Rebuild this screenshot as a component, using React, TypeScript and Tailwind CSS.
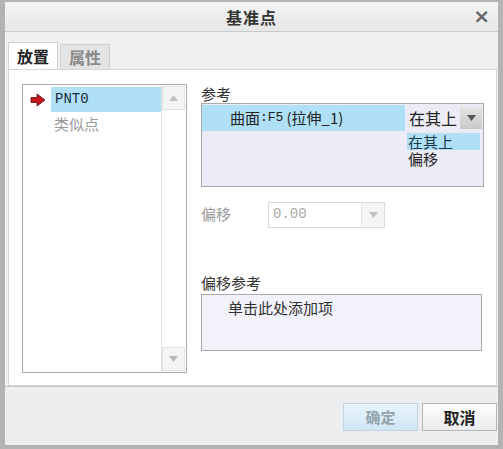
import React from 'react';

const cjk = "font-['Noto_Sans_CJK_SC','Noto_Sans',sans-serif]";

function ArrowIcon() {
  return (
    <svg width="16" height="14" viewBox="0 0 16 14">
      <path d="M1 4.5 H7 V1 L15 7 L7 13 V9.5 H1 Z" fill="#c8161d" stroke="#5a0a0a" strokeWidth="0.8" />
    </svg>
  );
}

function Caret({ color = '#9a9a9a' }: { color?: string }) {
  return (
    <svg width="9" height="6" viewBox="0 0 9 6">
      <path d="M0 0 H9 L4.5 6 Z" fill={color} />
    </svg>
  );
}

export default function App() {
  return (
    <div className={`w-[503px] h-[449px] flex flex-col bg-[#f0f1f2] border-l-[5px] border-r-[5px] border-t-2 border-b-4 border-[#b2b3b4] ${cjk}`}>
      {/* Title bar */}
      <div className="h-[30px] shrink-0 flex items-center justify-center relative bg-gradient-to-b from-[#f4f4f4] to-[#e6e7e8] border-b border-[#c9cacb]">
        <span className="text-[16px] font-bold text-[#333] tracking-[1px]">基准点</span>
        <span className="absolute right-[8px] top-[3px] text-[20px] font-bold text-[#666] leading-[22px] font-['DejaVu_Sans',sans-serif]">×</span>
      </div>

      {/* Tabs */}
      <div className="h-[37px] shrink-0 flex items-end pl-[3px] bg-[#eef0f1]">
        <div className="w-[50px] h-[27px] bg-white border border-b-0 border-[#cfd0d1] flex items-center justify-center text-[16px] font-bold text-[#222]">放置</div>
        <div className="w-[50px] h-[25px] ml-[2px] bg-[#e3e4e5] border border-b-0 border-[#cfd0d1] flex items-center justify-center text-[16px] font-bold text-[#888]">属性</div>
      </div>

      {/* Content */}
      <div className="h-[317px] shrink-0 mx-[3px] mr-[1px] bg-white border border-[#d4d5d6] flex pt-[14px] pl-[13px]">
        {/* Feature list */}
        <div className="w-[165px] h-[289px] border border-[#a9aaab] bg-white flex p-[1px]">
          <div className="flex-1 flex flex-col pt-[1px]">
            <div className="flex h-[25px]">
              <div className="w-[27px] flex items-center justify-center">
                <ArrowIcon />
              </div>
              <div className="flex-1 bg-[#b0e0f6] flex items-center pl-[4px] text-[14px] text-[#1a2a3a] font-['Liberation_Mono',monospace]">PNT0</div>
            </div>
            <div className="h-[24px] pl-[30px] flex items-center text-[15px] text-[#999]">类似点</div>
          </div>
          <div className="w-[24px] flex flex-col border-l border-[#e2e3e4]">
            <div className="h-[24px] bg-[#f3f4f5] border border-[#e0e1e2] flex items-center justify-center">
              <svg width="9" height="6" viewBox="0 0 9 6"><path d="M0 6 H9 L4.5 0 Z" fill="#c4c4c4" /></svg>
            </div>
            <div className="flex-1" />
            <div className="h-[24px] bg-[#f3f4f5] border border-[#e0e1e2] flex items-center justify-center">
              <Caret color="#b8b8b8" />
            </div>
          </div>
        </div>

        {/* Right side */}
        <div className="flex flex-col ml-[14px] w-[283px]">
          <div className="text-[15px] text-[#333] leading-[17px] mt-[1px]">参考</div>
          <div className="h-[84px] border border-[#a9aaab] bg-[#ecebf6] relative mt-[1px]">
            <div className="flex h-[26px] mt-[1px]">
              <div className="w-[203px] bg-[#b0e0f6] flex items-center pl-[28px] text-[15px] text-[#222]">
                曲面<span className="font-['Liberation_Mono',monospace] text-[13px]">:F5</span>
                <span className="ml-[3px]">(拉伸_1)</span>
              </div>
              <div className="flex-1 flex items-center pl-[4px]">
                <span className="text-[16px] text-[#222]">在其上</span>
                <div className="ml-[3px] w-[22px] h-[22px] bg-gradient-to-b from-[#e4e4e4] to-[#c9c9c9] flex items-center justify-center">
                  <Caret color="#555" />
                </div>
              </div>
            </div>
            <div className="absolute left-[205px] top-[29px] w-[73px] flex flex-col">
              <div className="h-[17px] bg-[#b0e0f6] flex items-center pl-[1px] text-[15px] text-[#1a3a4a] leading-none">在其上</div>
              <div className="h-[17px] flex items-center pl-[1px] text-[15px] text-[#222] leading-none">偏移</div>
            </div>
          </div>

          <div className="flex items-center mt-[14px] h-[27px]">
            <span className="w-[67px] text-[15px] text-[#999]">偏移</span>
            <div className="w-[117px] h-[26px] border border-[#d8d9da] bg-white flex">
              <span className="flex-1 flex items-center pl-[4px] text-[14px] text-[#aaa] font-['Liberation_Mono',monospace]">0.00</span>
              <div className="w-[23px] border-l border-[#e2e3e4] bg-[#f5f5f5] flex items-center justify-center">
                <Caret color="#c0c0c0" />
              </div>
            </div>
          </div>

          <div className="text-[15px] text-[#333] mt-[46px] leading-[17px]">偏移参考</div>
          <div className="h-[57px] w-[281px] border border-[#a9aaab] bg-[#f2f2fa] mt-[3px] pl-[26px] pt-[2px] text-[15px] text-[#333]">
            单击此处添加项
          </div>
        </div>
      </div>

      {/* Footer */}
      <div className="flex-1 flex justify-end items-start pt-[16px] pr-[1px] bg-[#eceef0] border-t border-[#c4c5c6]">
        <div className="w-[75px] h-[28px] border border-[#bfd6e2] bg-gradient-to-b from-[#e9f5fb] to-[#cfe7f4] flex items-center justify-center text-[15px] font-bold text-[#93a4ad]">确定</div>
        <div className="w-[75px] h-[28px] ml-[4px] border border-[#b5b6b7] bg-gradient-to-b from-[#fdfdfd] to-[#ececec] flex items-center justify-center text-[16px] font-bold text-[#222]">取消</div>
      </div>
    </div>
  );
}
